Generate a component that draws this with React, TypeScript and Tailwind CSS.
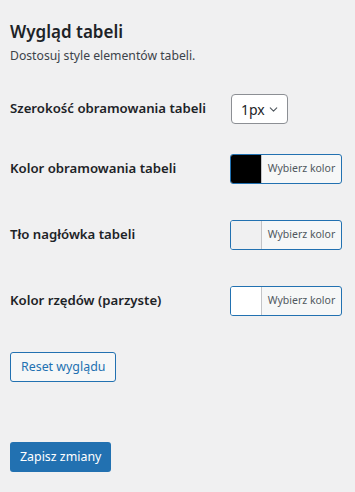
import { ChevronDown } from "lucide-react";

const font = { fontFamily: '"Noto Sans", "Open Sans", sans-serif' };

function ColorPicker({ swatch }: { swatch: string }) {
  return (
    <button className="flex h-[30px] w-[112px] overflow-hidden rounded-[3px] border border-[#2271b1] bg-[#f6f7f7] p-0">
      <span className={`h-full w-[31px] border-r border-[#c3c4c7] ${swatch}`} />
      <span className="flex flex-1 items-center justify-center text-[10.5px] text-[#50575e]">Wybierz kolor</span>
    </button>
  );
}

export default function App() {
  return (
    <div className="min-h-[492px] w-[355px] bg-[#f0f0f1] px-[10px] pt-[20px] text-[#1d2327]" style={font}>
      <h2 className="text-[17px] font-semibold leading-[24px]">Wygląd tabeli</h2>
      <p className="mt-[3px] text-[12.2px] leading-[18px] text-[#3c434a]">Dostosuj style elementów tabeli.</p>

      <div className="mt-[29px] flex h-[30px] items-center">
        <div className="-mt-[1px] w-[221px] text-[13.2px] font-semibold">Szerokość obramowania tabeli</div>
        <div className="flex h-[30px] w-[57px] items-center justify-between rounded-[4px] border border-[#8c8f94] bg-white pl-[9px] pr-[7px] text-[14px]">
          <span>1px</span>
          <ChevronDown size={13} strokeWidth={2} className="text-[#50575e]" />
        </div>
      </div>

      <div className="mt-[30px] flex h-[30px] items-center">
        <div className="w-[220px] text-[13.2px] font-semibold">Kolor obramowania tabeli</div>
        <ColorPicker swatch="bg-black" />
      </div>

      <div className="mt-[36px] flex h-[30px] items-center">
        <div className="w-[220px] text-[13.2px] font-semibold">Tło nagłówka tabeli</div>
        <ColorPicker swatch="bg-[#f0f0f1]" />
      </div>

      <div className="mt-[36px] flex h-[30px] items-center">
        <div className="w-[220px] text-[13.2px] font-semibold">Kolor rzędów (parzyste)</div>
        <ColorPicker swatch="bg-white" />
      </div>

      <button className="mt-[36px] h-[30px] rounded-[3px] border border-[#2271b1] bg-[#f6f7f7] px-[10px] text-[12.4px] text-[#2271b1]">
        Reset wyglądu
      </button>

      <div className="mt-[60px]">
        <button className="h-[30px] rounded-[3px] bg-[#2271b1] px-[10px] text-[12.4px] text-white">Zapisz zmiany</button>
      </div>
    </div>
  );
}
